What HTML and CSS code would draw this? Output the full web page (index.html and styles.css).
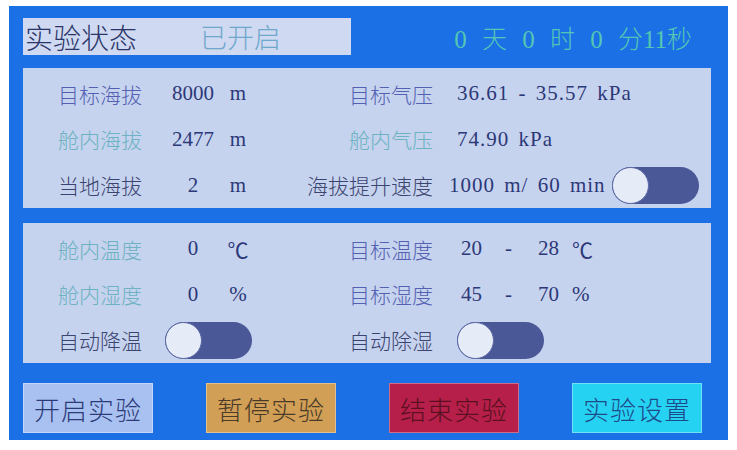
FILE: index.html
```html
<!DOCTYPE html>
<html lang="zh-CN">
<head>
  <meta charset="UTF-8">
  <meta name="viewport" content="width=device-width, initial-scale=1.0">
  <title>实验状态</title>
  <link rel="stylesheet" href="styles.css">
</head>
<body>
  <div class="screen">
    <header class="top">
      <div class="status">
        <span class="status-title">实验状态</span>
        <span class="status-value">已开启</span>
      </div>
      <div class="timer">0 天 0 时 0 分11秒</div>
    </header>

    <section class="panel">
      <div class="row">
        <span class="label target">目标海拔</span>
        <span class="value">8000</span>
        <span class="unit">m</span>
        <span class="rlabel target">目标气压</span>
        <span class="rvalue spaced">36.61 - 35.57 kPa</span>
      </div>
      <div class="row">
        <span class="label cabin">舱内海拔</span>
        <span class="value">2477</span>
        <span class="unit">m</span>
        <span class="rlabel cabin">舱内气压</span>
        <span class="rvalue spaced">74.90 kPa</span>
      </div>
      <div class="row">
        <span class="label plain">当地海拔</span>
        <span class="value">2</span>
        <span class="unit">m</span>
        <span class="rlabel plain">海拔提升速度</span>
        <span class="rvalue rate"><span class="spaced">1000 m/ 60 min</span>
          <span class="switch"><span class="knob"></span></span>
        </span>
      </div>
    </section>

    <section class="panel">
      <div class="row">
        <span class="label cabin">舱内温度</span>
        <span class="value">0</span>
        <span class="unit">℃</span>
        <span class="rlabel target">目标温度</span>
        <span class="rvalue range"><span class="lo">20</span><span class="dash">-</span><span class="hi">28</span><span>℃</span></span>
      </div>
      <div class="row">
        <span class="label cabin">舱内湿度</span>
        <span class="value">0</span>
        <span class="unit">%</span>
        <span class="rlabel target">目标湿度</span>
        <span class="rvalue range"><span class="lo">45</span><span class="dash">-</span><span class="hi">70</span><span>%</span></span>
      </div>
      <div class="row">
        <span class="label plain">自动降温</span>
        <span class="switch-cell"><span class="switch"><span class="knob"></span></span></span>
        <span class="rlabel plain">自动除湿</span>
        <span class="rvalue"><span class="switch"><span class="knob"></span></span></span>
      </div>
    </section>

    <nav class="actions">
      <button class="btn btn-start">开启实验</button>
      <button class="btn btn-pause">暂停实验</button>
      <button class="btn btn-stop">结束实验</button>
      <button class="btn btn-setup">实验设置</button>
    </nav>
  </div>
</body>
</html>
```

FILE: styles.css
```css
body {
  margin: 0;
  background: #fff;
  font-family: "Liberation Serif", "Noto Sans CJK SC", serif;
}
.screen {
  margin: 6px 0 0 9px;
  width: 719px;
  height: 434px;
  box-sizing: border-box;
  padding: 12px 17px 7px 14px;
  background: #1b70e6;
  display: flex;
  flex-direction: column;
}
.top {
  height: 37px;
  display: flex;
  align-items: center;
  justify-content: space-between;
}
.status {
  width: 328px;
  height: 37px;
  background: #cfd9f1;
  display: flex;
  align-items: center;
  box-sizing: border-box;
  padding-left: 2px;
}
.status-title {
  font-size: 28px;
  font-weight: 300;
  color: #2a3468;
  width: 175px;
}
.status-value {
  font-size: 27px;
  font-weight: 300;
  color: #70a8cc;
}
.timer {
  font-size: 25px;
  font-weight: 300;
  color: #55c6b4;
  margin-right: 19px;
  white-space: pre;
  word-spacing: 9px;
}
.panel {
  height: 140px;
  margin-top: 13px;
  background: #c6d3ee;
  box-sizing: border-box;
  padding: 3px 0 0 35px;
  display: grid;
  grid-template-rows: repeat(3, 1fr);
}
.panel + .panel {
  margin-top: 15px;
}
.row {
  display: grid;
  grid-template-columns: 110px 50px 40px 175px 1fr;
  align-items: center;
  font-size: 21px;
  color: #2c3878;
}
.label, .rlabel {
  font-weight: 300;
}
.rlabel {
  text-align: right;
}
.rvalue {
  padding-left: 24px;
  display: flex;
  align-items: center;
}
.spaced {
  letter-spacing: 1px;
  word-spacing: 3px;
  white-space: pre;
}
.value, .unit {
  text-align: center;
}
.target { color: #5461b2; }
.cabin { color: #6cb2c2; }
.plain { color: #3b4470; }
.rate {
  margin-left: -8px;
  gap: 6px;
}
.range {
  padding-left: 28px;
}
.range .lo { width: 44px; }
.range .dash { width: 33px; }
.range .hi { width: 34px; }
.switch-cell {
  grid-column: 2 / 4;
  margin-left: -3px;
}
.switch {
  display: flex;
  width: 87px;
  height: 37px;
  border-radius: 19px;
  background: #4a5898;
}
.knob {
  width: 35px;
  height: 35px;
  border-radius: 50%;
  background: #e6ebf8;
  border: 1px solid #5a68a4;
}
.actions {
  margin-top: 20px;
  display: flex;
  gap: 53px;
}
.btn {
  width: 130px;
  height: 50px;
  border: 1px solid rgba(255, 255, 255, 0.35);
  padding: 0;
  font-family: "Noto Sans CJK SC", sans-serif;
  font-size: 26px;
  font-weight: 300;
  letter-spacing: 1px;
}
.btn-start { background: #a9c1f1; color: #2c3a78; }
.btn-pause { background: #d19f55; color: #4a3a2a; }
.btn-stop { background: #b61f4a; color: #5a1020; }
.btn-setup { background: #26d2f2; color: #1e4a8a; }
```
